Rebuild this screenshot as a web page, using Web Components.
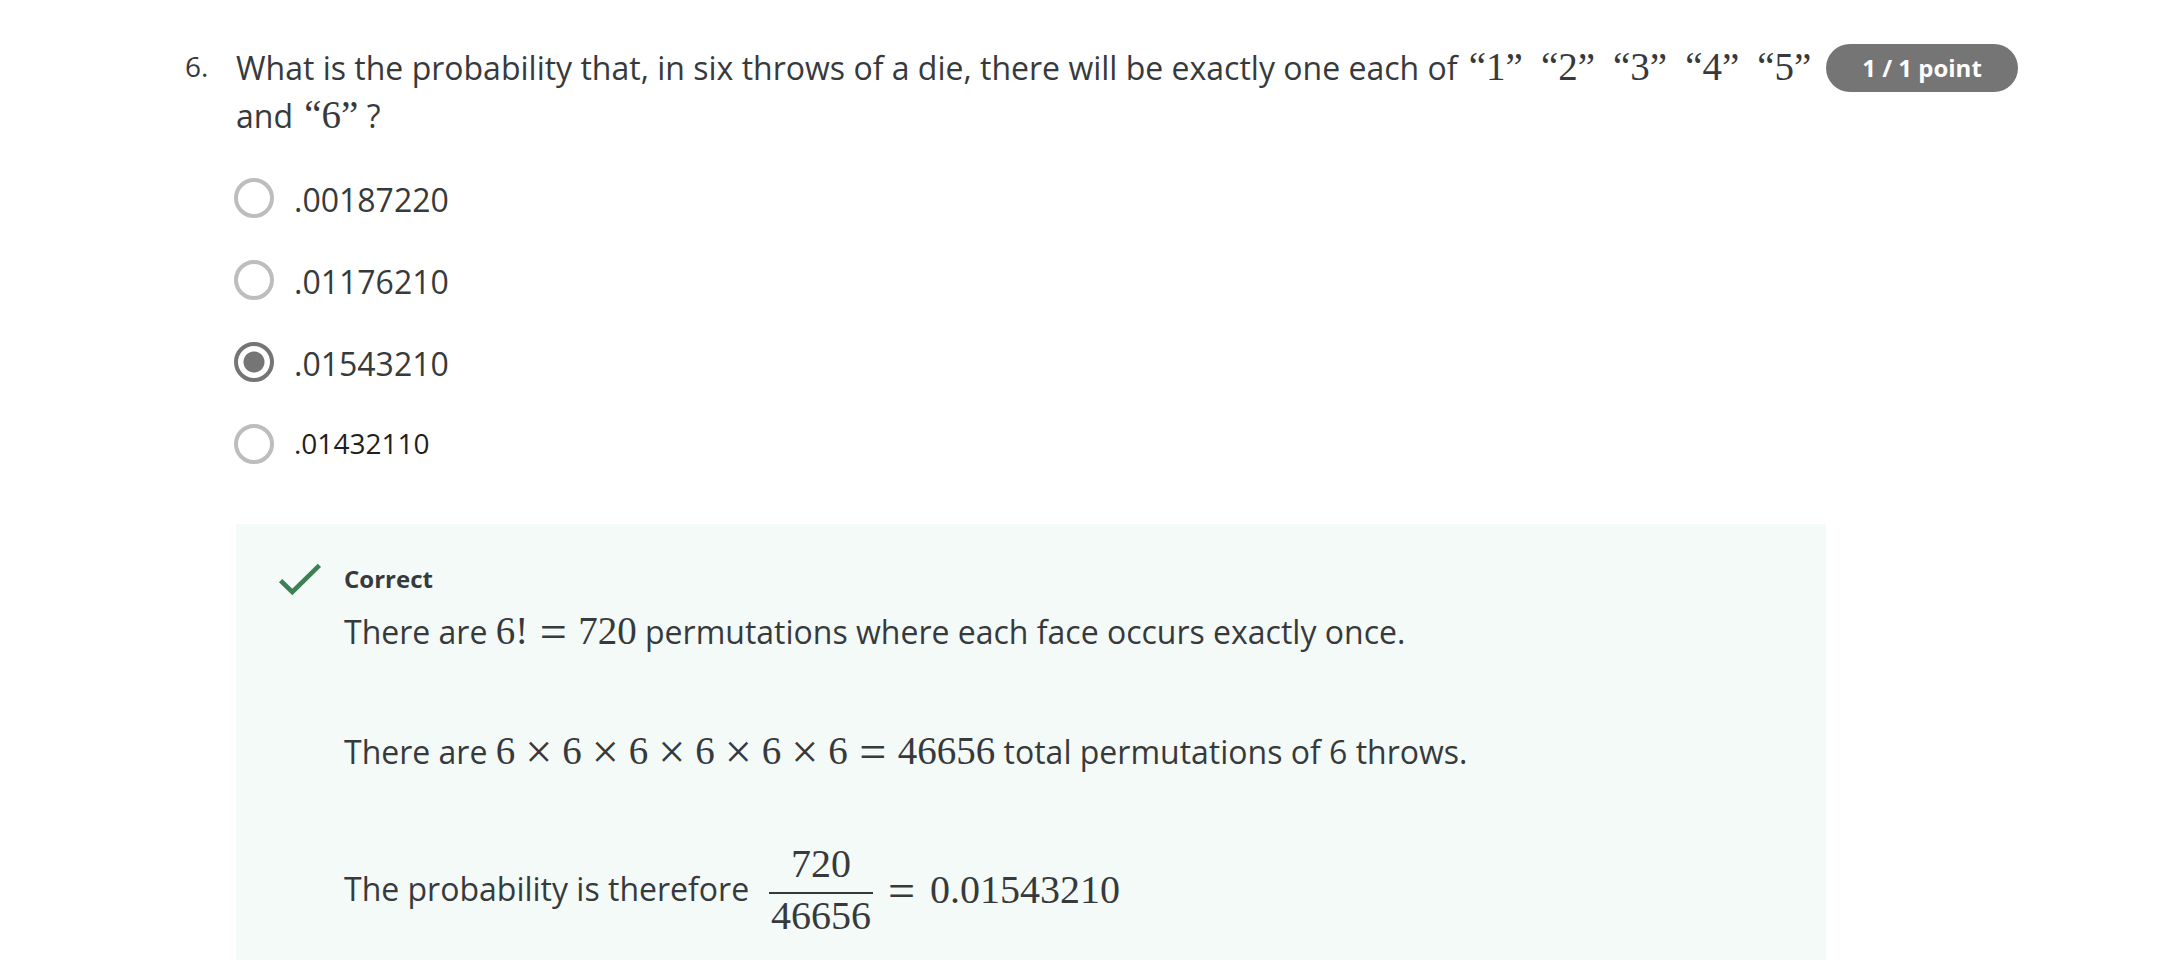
<!DOCTYPE html>
<html lang="en">
<head>
<meta charset="utf-8">
<title>Quiz question</title>
<style>
  body {
    margin: 0;
    background: #fff;
    color: #373a3c;
    font: 32px/48px "Open Sans", "Noto Sans", sans-serif;
  }
</style>
</head>
<body>
<quiz-question>
  <span slot="number">6.</span>
  <span slot="prompt">What is the probability that, in six throws of a die, there will be exactly one each of <math-run quoted>“1”</math-run><math-run quoted next>“2”</math-run><math-run quoted next>“3”</math-run><math-run quoted next>“4”</math-run><math-run quoted next>“5”</math-run> and <math-run quoted>“6”</math-run> ?</span>
  <score-badge slot="score">1 / 1 point</score-badge>
  <choice-list selected="2">
    <span>.00187220</span>
    <span>.01176210</span>
    <span>.01543210</span>
    <span class="plain">.01432110</span>
  </choice-list>
  <answer-feedback>
    <span slot="title">Correct</span>
    <feedback-line>There are <math-run>6!<math-op wide>=</math-op>720</math-run> permutations where each face occurs exactly once.</feedback-line>
    <feedback-line>There are <math-run>6<math-op>×</math-op>6<math-op>×</math-op>6<math-op>×</math-op>6<math-op>×</math-op>6<math-op>×</math-op>6<math-op wide>=</math-op>46656</math-run> total permutations of 6 throws.</feedback-line>
    <feedback-line row><span>The probability is therefore</span><math-fraction><span slot="top">720</span><span slot="bottom">46656</span></math-fraction><math-run result><math-op spaced>=</math-op>0.01543210</math-run></feedback-line>
  </answer-feedback>
</quiz-question>

<script>
const define = (name, html, setup) => {
  const template = document.createElement('template');
  template.innerHTML = html;
  customElements.define(name, class extends HTMLElement {
    constructor() {
      super();
      this.attachShadow({ mode: 'open' }).append(template.content.cloneNode(true));
    }
    connectedCallback() { if (setup) setup(this, this.shadowRoot); }
  });
};

define('math-run', `
  <style>
    :host { font: 39px/1 "Liberation Serif", serif; line-height: 0; white-space: nowrap; }
    :host([quoted]) { display: inline-block; margin-left: 3px; }
    :host([next]) { margin-left: 18px; }
    :host([result]) { padding-top: 2px; font-size: 40px; line-height: 44px; }
  </style><slot></slot>`);

define('math-op', `
  <style>
    :host { display: inline-block; width: 47px; text-align: center; font-size: 48px; line-height: 0; vertical-align: -4px; }
    :host([wide]) { width: 50px; }
    :host([spaced]) { width: 57px; }
  </style><slot></slot>`);

define('math-fraction', `
  <style>
    :host { display: flex; flex-direction: column; margin-left: 20px; text-align: center; font: 40px/44px "Liberation Serif", serif; }
    .top { padding: 2px 0 6px; border-bottom: 2px solid currentColor; }
    .bottom { padding: 0 2px; }
  </style>
  <div class="top"><slot name="top"></slot></div>
  <div class="bottom"><slot name="bottom"></slot></div>`);

define('score-badge', `
  <style>
    :host { display: block; align-self: start; width: 192px; border-radius: 24px; background: #757575; color: #fff; text-align: center; font-size: 24px; font-weight: 700; line-height: 48px; }
  </style><slot></slot>`);

define('choice-list', `
  <style>
    :host { display: block; margin: 38px 0 18px -2px; }
    fieldset { margin: 0; padding: 0; border: 0; display: grid; grid-auto-rows: 82px; justify-items: start; }
    label { display: flex; align-items: flex-start; gap: 20px; line-height: 44px; cursor: pointer; }
    input { appearance: none; flex: none; width: 40px; height: 40px; margin: 0; border: 4px solid #bdbdbd; border-radius: 50%; background: #fff; }
    input:checked { border-color: #757575; background: radial-gradient(circle, #757575 10px, #fff 11px); }
    ::slotted(.plain) { color: #1f1f1f; font-size: 28px; line-height: 38px; }
  </style>
  <fieldset></fieldset>`, (host, root) => {
    const group = root.querySelector('fieldset');
    if (group.children.length) return;
    const selected = Number(host.getAttribute('selected'));
    [...host.children].forEach((choice, i) => {
      choice.slot = 'choice-' + i;
      const label = document.createElement('label');
      const input = document.createElement('input');
      input.type = 'radio';
      input.name = 'choice';
      input.checked = i === selected;
      const slot = document.createElement('slot');
      slot.name = choice.slot;
      label.append(input, slot);
      group.append(label);
    });
  });

define('feedback-line', `
  <style>
    :host { display: block; }
    :host([row]) { display: flex; align-items: center; }
  </style><slot></slot>`);

define('answer-feedback', `
  <style>
    :host { display: grid; grid-template-columns: 64px 1fr; padding: 39px 44px 22px; background: #f4faf8; }
    svg { display: block; width: 44px; height: 36px; overflow: visible; }
    .title { font-size: 24px; font-weight: 700; line-height: 32px; margin-bottom: 13px; }
    .lines { display: flex; flex-direction: column; }
    ::slotted(feedback-line) { margin-bottom: 72px; }
    ::slotted(feedback-line:nth-last-child(2)) { margin-bottom: 64px; }
    ::slotted(feedback-line:last-child) { margin-bottom: 0; }
  </style>
  <svg viewBox="0 0 44 36" aria-hidden="true"><path d="M0.6 17.6 12.3 29 39.4 2.3" fill="none" stroke="#3d8055" stroke-width="4.6"/></svg>
  <div>
    <div class="title"><slot name="title"></slot></div>
    <div class="lines"><slot></slot></div>
  </div>`);

define('quiz-question', `
  <style>
    :host { display: grid; grid-template-columns: 51px minmax(0, 1fr) auto; padding: 44px 142px 16px 185px; }
    .number { font-size: 28px; line-height: 44px; }
    .body { grid-column: 2; }
  </style>
  <div class="number"><slot name="number"></slot></div>
  <div><slot name="prompt"></slot></div>
  <slot name="score"></slot>
  <div class="body"><slot></slot></div>`);
</script>
</body>
</html>
